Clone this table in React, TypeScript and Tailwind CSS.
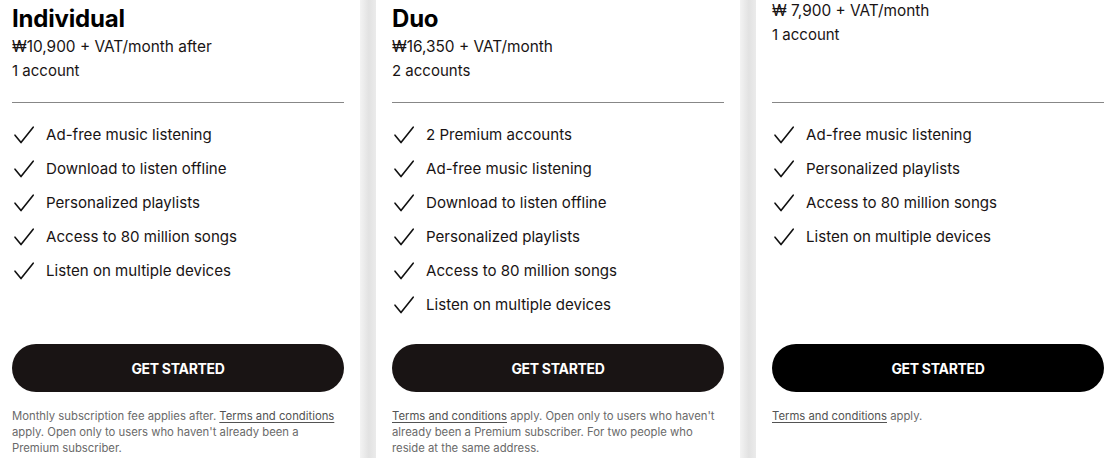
import React from "react";

type Plan = {
  key: string;
  top: string | null;
  name: string;
  price: string;
  accounts: string;
  features: string[];
  btn: string;
  footer: React.ReactNode;
};

const Terms = () => (
  <span className="underline underline-offset-2 text-[#535353]">Terms and conditions</span>
);

const plans: Plan[] = [
  {
    key: "ind",
    top: "Premium",
    name: "Individual",
    price: "₩10,900 + VAT/month after",
    accounts: "1 account",
    features: [
      "Ad-free music listening",
      "Download to listen offline",
      "Personalized playlists",
      "Access to 80 million songs",
      "Listen on multiple devices",
    ],
    btn: "bg-[#191414]",
    footer: (
      <>
        Monthly subscription fee applies after. <Terms /> apply. Open only to users who haven't already been a Premium subscriber.
      </>
    ),
  },
  {
    key: "duo",
    top: "Premium",
    name: "Duo",
    price: "₩16,350 + VAT/month",
    accounts: "2 accounts",
    features: [
      "2 Premium accounts",
      "Ad-free music listening",
      "Download to listen offline",
      "Personalized playlists",
      "Access to 80 million songs",
      "Listen on multiple devices",
    ],
    btn: "bg-[#191414]",
    footer: (
      <>
        <Terms /> apply. Open only to users who haven't already been a Premium subscriber. For two people who reside at the same address.
      </>
    ),
  },
  {
    key: "free",
    top: null,
    name: "Student",
    price: "₩ 7,900 + VAT/month",
    accounts: "1 account",
    features: [
      "Ad-free music listening",
      "Personalized playlists",
      "Access to 80 million songs",
      "Listen on multiple devices",
    ],
    btn: "bg-black",
    footer: (
      <>
        <Terms /> apply.
      </>
    ),
  },
];

const Check = () => (
  <svg width="24" height="24" viewBox="0 0 24 24" fill="none" className="shrink-0">
    <path d="M3 12.2 L9 19.6 L21.2 4.2" stroke="#111" strokeWidth="1.6" strokeLinecap="round" strokeLinejoin="round" />
  </svg>
);

function Card({ p }: { p: Plan }) {
  return (
    <div className="w-[364px] shrink-0 bg-white px-4 pt-4 flex flex-col">
      <div className="h-[136px] pt-px flex flex-col">
        {p.top && <div className="h-9 text-[14px] leading-9 text-[#191414]">{p.top}</div>}
        <h3 className="text-[24px] leading-8 font-bold text-black tracking-[-0.2px]">{p.name}</h3>
        <p className="text-[15.4px] leading-6 text-[#191414]">{p.price}</p>
        <p className="text-[15px] leading-6 text-[#191414]">{p.accounts}</p>
      </div>
      <div className="h-px bg-[#878787]" />
      <ul className="h-[241px] pt-[20px] flex flex-col gap-[10px]">
        {p.features.map((f) => (
          <li key={f} className="h-6 flex items-center gap-[10px] text-[15.1px] text-[#191414]">
            <Check />
            <span>{f}</span>
          </li>
        ))}
      </ul>
      <button className={`h-12 w-full rounded-full ${p.btn} text-white text-[14px] font-bold tracking-[-0.3px]`}>
        GET STARTED
      </button>
      <p className="mt-[16px] text-[11.3px] leading-4 text-[#6a6a6a] pb-8">{p.footer}</p>
    </div>
  );
}

const Gap = () => (
  <div className="w-4 shrink-0 bg-[linear-gradient(to_right,#f3f3f3,#e2e2e2_55%,#ebebeb)]" />
);

export default function App() {
  return (
    <div
      className="w-[1116px] h-[458px] overflow-hidden bg-white"
      style={{ fontFamily: "Inter, 'Noto Sans', sans-serif" }}
    >
      <div className="flex items-stretch -mt-[50px] -ml-1">
        <Card p={plans[0]} />
        <Gap />
        <Card p={plans[1]} />
        <Gap />
        <Card p={plans[2]} />
      </div>
    </div>
  );
}
